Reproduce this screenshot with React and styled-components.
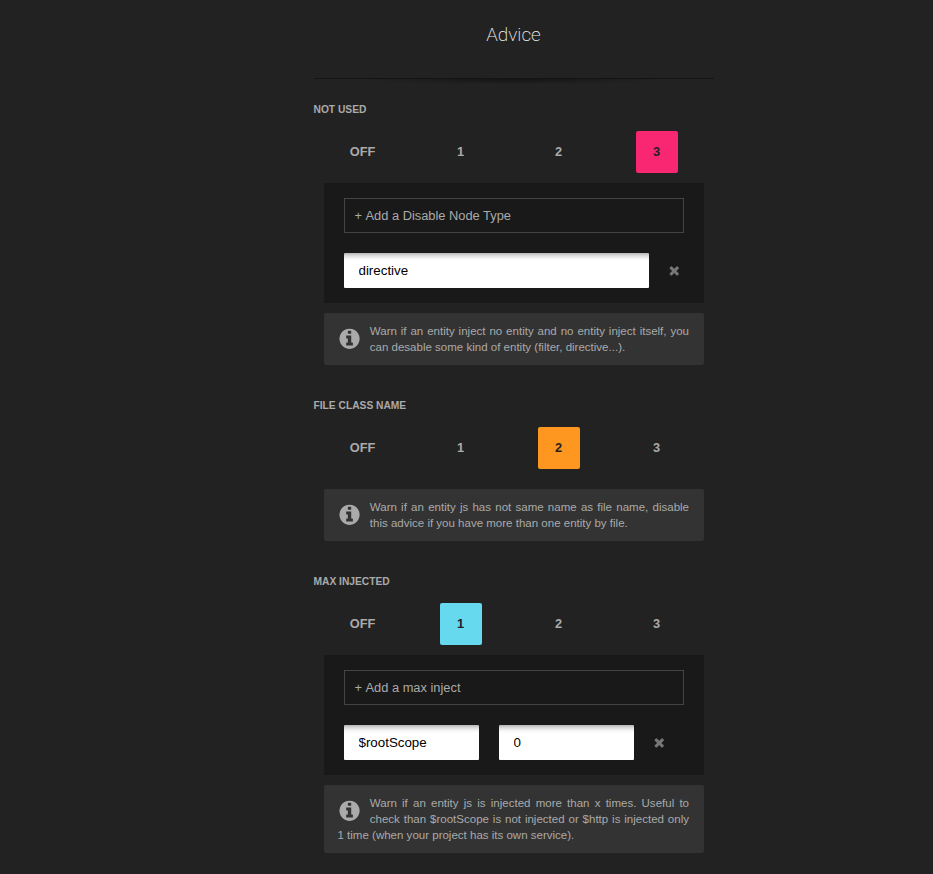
import React from "react";
import styled, { createGlobalStyle } from "styled-components";

const GlobalStyle = createGlobalStyle`
  * { box-sizing: border-box; }
  body {
    margin: 0;
    overflow: hidden;
    background: #222;
    color: #aaa;
    font: 12.8px/16px "Liberation Sans", Arial, sans-serif;
  }
`;

const Page = styled.main`
  width: 400px;
  height: 874px;
  margin-left: 313.5px;
`;

const Header = styled.header`
  height: 78px;
  padding-top: 22px;
`;

const Title = styled.h1`
  margin: 0;
  text-align: center;
  font: 200 19px/25px Roboto, sans-serif;
  color: #f0f0f0;
`;

const Divider = styled.div`
  height: 8px;
  border-top: 1px solid #141414;
  background: radial-gradient(ellipse 38% 75% at 50% 0, #151515, #222);
`;

const Section = styled.section`
  padding-top: 16px;
  margin-bottom: 16px;

  & + & {
    padding-top: 17px;
  }
`;

const SectionTitle = styled.h2`
  margin: 0 0 13px;
  font-size: 10.24px;
  line-height: 16px;
  font-weight: bold;
  text-transform: uppercase;
`;

const Levels = styled.div`
  display: flex;
  width: 392px;
  margin-bottom: ${(p) => (p.$spaced ? 20 : 10)}px;
`;

const LevelCell = styled.div`
  flex: 1;
  display: flex;
  justify-content: center;
`;

const Level = styled.button`
  width: 42px;
  height: 42px;
  padding: 0;
  border: 0;
  border-radius: 2px;
  font: bold 12.8px/42px "Liberation Sans", Arial, sans-serif;
  color: ${(p) => (p.$color ? "#222" : "#aaa")};
  background: ${(p) => p.$color || "transparent"};
`;

const Panel = styled.div`
  margin: 0 10px 10px;
  padding: 15px 20px;
  height: 120px;
  background: #191919;
`;

const AddButton = styled.button`
  display: flex;
  align-items: center;
  gap: 3.5px;
  width: 100%;
  height: 35px;
  padding: 0 10px;
  border: 1px solid #444;
  background: transparent;
  color: #aaa;
  font: 12.85px "Liberation Sans", Arial, sans-serif;
`;

const Fields = styled.div`
  display: flex;
  align-items: center;
  gap: 20px;
  margin-top: 20px;
`;

const Input = styled.input`
  width: ${(p) => p.$width}px;
  height: 35px;
  padding: 0 15px;
  border: 0;
  border-radius: 1px;
  background: #fff linear-gradient(#b4b4b4, #dedede 3px, #f8f8f8 6px, #fff 8px);
  color: #000;
  font: 13.33px "Liberation Sans", Arial, sans-serif;
`;

const RemoveIcon = styled.svg`
  display: block;
  width: 14px;
  height: 14px;
  margin: 0 0 1px -1.5px;
  fill: #777;
`;

const Info = styled.p`
  margin: 0 10px;
  padding: 10px 14.5px 10px 14px;
  border-radius: 2px;
  background: #333;
  font-size: 11.52px;
  line-height: 16px;
  text-align: justify;
`;

const InfoIcon = styled.svg`
  float: left;
  width: 23.6px;
  height: 23.6px;
  margin: 4px 8.7px 0 0;
  fill: #aaa;
`;

function Remove() {
  return (
    <RemoveIcon viewBox="-30 -60 1792 1792">
      <path d="M1490 1322q0 40-28 68l-136 136q-28 28-68 28t-68-28l-294-294-294 294q-28 28-68 28t-68-28l-136-136q-28-28-28-68t28-68l294-294-294-294q-28-28-28-68t28-68l136-136q28-28 68-28t68 28l294 294 294-294q28-28 68-28t68 28l136 136q28 28 28 68t-28 68l-294 294 294 294q28 28 28 68z" />
    </RemoveIcon>
  );
}

function Hint({ children }) {
  return (
    <Info>
      <InfoIcon viewBox="20 0 1792 1792">
        <path d="M1152 1376v-160q0-14-9-23t-23-9h-96v-512q0-14-9-23t-23-9h-320q-14 0-23 9t-9 23v160q0 14 9 23t23 9h96v320h-96q-14 0-23 9t-9 23v160q0 14 9 23t23 9h448q14 0 23-9t9-23zm-128-896v-160q0-14-9-23t-23-9h-192q-14 0-23 9t-9 23v160q0 14 9 23t23 9h192q14 0 23-9t9-23zm640 416q0 209-103 385.5t-279.5 279.5-385.5 103-385.5-103-279.5-279.5-103-385.5 103-385.5 279.5-279.5 385.5-103 385.5 103 279.5 279.5 103 385.5z" />
      </InfoIcon>
      {children}
    </Info>
  );
}

function AddAction({ children }) {
  return (
    <AddButton>
      <span>+</span>
      <span>{children}</span>
    </AddButton>
  );
}

const COLORS = { 1: "#66d9ef", 2: "#fd971f", 3: "#f92672" };

function LevelPicker({ value, spaced }) {
  return (
    <Levels $spaced={spaced}>
      {["OFF", "1", "2", "3"].map((level) => (
        <LevelCell key={level}>
          <Level $color={level === value ? COLORS[level] : undefined}>{level}</Level>
        </LevelCell>
      ))}
    </Levels>
  );
}

export default function App() {
  return (
    <>
      <GlobalStyle />
      <Page>
        <Header>
          <Title>Advice</Title>
        </Header>
        <Divider />
        <Section>
          <SectionTitle>Not used</SectionTitle>
          <LevelPicker value="3" />
          <Panel>
            <AddAction>Add a Disable Node Type</AddAction>
            <Fields>
              <Input $width={305} defaultValue="directive" />
              <Remove />
            </Fields>
          </Panel>
          <Hint>
            Warn if an entity inject no entity and no entity inject itself, you can desable some
            kind of entity (filter, directive...).
          </Hint>
        </Section>
        <Section>
          <SectionTitle>File class name</SectionTitle>
          <LevelPicker value="2" spaced />
          <Hint>
            Warn if an entity js has not same name as file name, disable this advice if you have
            more than one entity by file.
          </Hint>
        </Section>
        <Section>
          <SectionTitle>Max injected</SectionTitle>
          <LevelPicker value="1" />
          <Panel>
            <AddAction>Add a max inject</AddAction>
            <Fields>
              <Input $width={135} defaultValue="$rootScope" />
              <Input $width={135} defaultValue="0" />
              <Remove />
            </Fields>
          </Panel>
          <Hint>
            Warn if an entity js is injected more than x times. Useful to check than $rootScope is
            not injected or $http is injected only 1 time (when your project has its own service).
          </Hint>
        </Section>
      </Page>
    </>
  );
}
